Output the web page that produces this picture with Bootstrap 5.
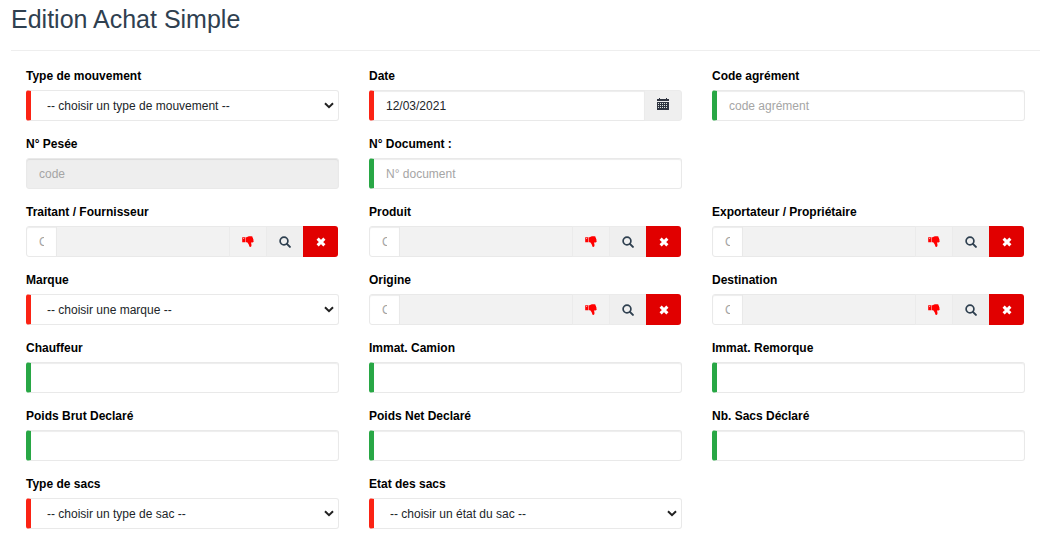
<!DOCTYPE html>
<html lang="fr">
<head>
<meta charset="utf-8">
<meta name="viewport" content="width=device-width, initial-scale=1">
<title>Edition Achat Simple</title>
<link href="https://cdn.jsdelivr.net/npm/bootstrap@5.3.0/dist/css/bootstrap.min.css" rel="stylesheet">
<style>
body{font-family:"Liberation Sans",Arial,sans-serif;font-size:12px;color:#212529;background:#fff;overflow:hidden}
.page{padding:0 14px 0 11px}
.page-title{font-size:25px;line-height:30px;height:46px;padding-top:4px;color:#2f4050;font-weight:400;margin:0 0 17px;border-bottom:1px solid #eee;box-sizing:content-box}
.entry{--bs-gutter-x:30px;--bs-gutter-y:0}
.entry>.col-4{height:68px}
.form-label{display:block;font-weight:700;color:#000;line-height:17px;margin:0 0 5px}
.form-control,.form-select{height:31px;font-size:12px;line-height:18px;padding:5px 12px;border:1px solid #e9e9e9;border-radius:3px;color:#212529}
.form-control{box-shadow:inset 0 1px 1px rgba(0,0,0,.075)}
.form-control::placeholder{color:#a5a5a5;opacity:1}
.form-control:disabled{background:#eee}
.form-select{padding-left:16px;background-image:url("data:image/svg+xml,%3Csvg xmlns='http://www.w3.org/2000/svg' viewBox='0 0 10 7'%3E%3Cpath d='M1 1.2l4 4 4-4' fill='none' stroke='%23222' stroke-width='2'/%3E%3C/svg%3E");background-size:10px 7px;background-position:right 4px top 11px}
.required,.optional{border-left-width:5px}
.required{border-left-color:#fb2314}
.optional{border-left-color:#28a745}
.btn{font-size:12px;border-radius:3px;padding:0;height:31px;display:flex;align-items:center;justify-content:center}
.btn-tool{width:38px;background:#efefef;border:1px solid #ebebeb;color:#2f4050}
.btn-date{padding-bottom:3px}
.btn-flag{width:38px;background:#f2f2f2;color:#f00}
.btn-clear{width:35px;background:#e10000;border:0;color:#fff}
.lookup{width:312px}
.lookup .code{flex:0 0 31px;padding-right:12px}
.lookup .wording{background:#f2f2f2;box-shadow:none}
.lookup>.btn-clear:not(:first-child){margin-left:0}
</style>
</head>
<body>
<svg class="d-none">
  <symbol id="thumb" viewBox="0 0 12 12"><path d="M.2 1.3h3.3v4.9H.2zM4 1.5C5.4 1 6.3.3 7.7.3h1.8c.8 0 1.2.5 1 1.1.6.4.7.9.5 1.4.5.4.6 1 .3 1.4.8 1.1.2 2.2-.8 2.2H9c.2 1.3.8 2.5.3 3.8-.3.9-1.7 1.1-2 .1-.2-1.8-1.3-2.9-2.2-4H4z" fill="currentColor"/><circle cx="1.7" cy="2.5" r=".5" fill="#f2f2f2"/></symbol>
  <symbol id="search" viewBox="0 0 12 12"><circle cx="5" cy="5" r="3.9" fill="none" stroke="currentColor" stroke-width="1.7"/><path d="M7.9 7.9l3 3" stroke="currentColor" stroke-width="2" stroke-linecap="round"/></symbol>
  <symbol id="clear" viewBox="0 0 10 10"><path d="M1.6 1.6l6.8 6.8M8.4 1.6L1.6 8.4" stroke="currentColor" stroke-width="3"/></symbol>
  <symbol id="calendar" viewBox="0 0 12 12"><path d="M0 1h2V0h1v1h6V0h1v1h2v2H0zM0 4h12v8H0z" fill="#2f3440"/><path d="M1 5.5h10M1 7.5h10M1 9.5h10" stroke="#dce5df" stroke-dasharray="1 1"/></symbol>
</svg>
<main class="page">
  <h1 class="page-title">Edition Achat Simple</h1>
  <form class="row entry mx-0">
    <div class="col-4"><label class="form-label">Type de mouvement</label><select class="form-select required"><option>-- choisir un type de mouvement --</option></select></div>
    <div class="col-4"><label class="form-label">Date</label><div class="input-group"><input class="form-control required" value="12/03/2021"><button class="btn btn-tool btn-date" type="button"><svg width="12" height="12"><use href="#calendar"/></svg></button></div></div>
    <div class="col-4"><label class="form-label">Code agrément</label><input class="form-control optional" placeholder="code agrément"></div>

    <div class="col-4"><label class="form-label">N° Pesée</label><input class="form-control" placeholder="code" disabled></div>
    <div class="col-4"><label class="form-label">N° Document :</label><input class="form-control optional" placeholder="N° document"></div>
    <div class="col-4"></div>

    <div class="col-4"><label class="form-label">Traitant / Fournisseur</label><div class="input-group lookup"><input class="form-control code" placeholder="Code"><input class="form-control wording" readonly><button class="btn btn-tool btn-flag" type="button"><svg width="12" height="12"><use href="#thumb"/></svg></button><button class="btn btn-tool" type="button"><svg width="12" height="12"><use href="#search"/></svg></button><button class="btn btn-clear" type="button"><svg width="10" height="10"><use href="#clear"/></svg></button></div></div>
    <div class="col-4"><label class="form-label">Produit</label><div class="input-group lookup"><input class="form-control code" placeholder="Code"><input class="form-control wording" readonly><button class="btn btn-tool btn-flag" type="button"><svg width="12" height="12"><use href="#thumb"/></svg></button><button class="btn btn-tool" type="button"><svg width="12" height="12"><use href="#search"/></svg></button><button class="btn btn-clear" type="button"><svg width="10" height="10"><use href="#clear"/></svg></button></div></div>
    <div class="col-4"><label class="form-label">Exportateur / Propriétaire</label><div class="input-group lookup"><input class="form-control code" placeholder="Code"><input class="form-control wording" readonly><button class="btn btn-tool btn-flag" type="button"><svg width="12" height="12"><use href="#thumb"/></svg></button><button class="btn btn-tool" type="button"><svg width="12" height="12"><use href="#search"/></svg></button><button class="btn btn-clear" type="button"><svg width="10" height="10"><use href="#clear"/></svg></button></div></div>

    <div class="col-4"><label class="form-label">Marque</label><select class="form-select required"><option>-- choisir une marque --</option></select></div>
    <div class="col-4"><label class="form-label">Origine</label><div class="input-group lookup"><input class="form-control code" placeholder="Code"><input class="form-control wording" readonly><button class="btn btn-tool btn-flag" type="button"><svg width="12" height="12"><use href="#thumb"/></svg></button><button class="btn btn-tool" type="button"><svg width="12" height="12"><use href="#search"/></svg></button><button class="btn btn-clear" type="button"><svg width="10" height="10"><use href="#clear"/></svg></button></div></div>
    <div class="col-4"><label class="form-label">Destination</label><div class="input-group lookup"><input class="form-control code" placeholder="Code"><input class="form-control wording" readonly><button class="btn btn-tool btn-flag" type="button"><svg width="12" height="12"><use href="#thumb"/></svg></button><button class="btn btn-tool" type="button"><svg width="12" height="12"><use href="#search"/></svg></button><button class="btn btn-clear" type="button"><svg width="10" height="10"><use href="#clear"/></svg></button></div></div>

    <div class="col-4"><label class="form-label">Chauffeur</label><input class="form-control optional"></div>
    <div class="col-4"><label class="form-label">Immat. Camion</label><input class="form-control optional"></div>
    <div class="col-4"><label class="form-label">Immat. Remorque</label><input class="form-control optional"></div>

    <div class="col-4"><label class="form-label">Poids Brut Declaré</label><input class="form-control optional"></div>
    <div class="col-4"><label class="form-label">Poids Net Declaré</label><input class="form-control optional"></div>
    <div class="col-4"><label class="form-label">Nb. Sacs Déclaré</label><input class="form-control optional"></div>

    <div class="col-4"><label class="form-label">Type de sacs</label><select class="form-select required"><option>-- choisir un type de sac --</option></select></div>
    <div class="col-4"><label class="form-label">Etat des sacs</label><select class="form-select required"><option>-- choisir un état du sac --</option></select></div>
  </form>
</main>
<script src="https://cdn.jsdelivr.net/npm/bootstrap@5.3.0/dist/js/bootstrap.bundle.min.js"></script>
</body>
</html>
